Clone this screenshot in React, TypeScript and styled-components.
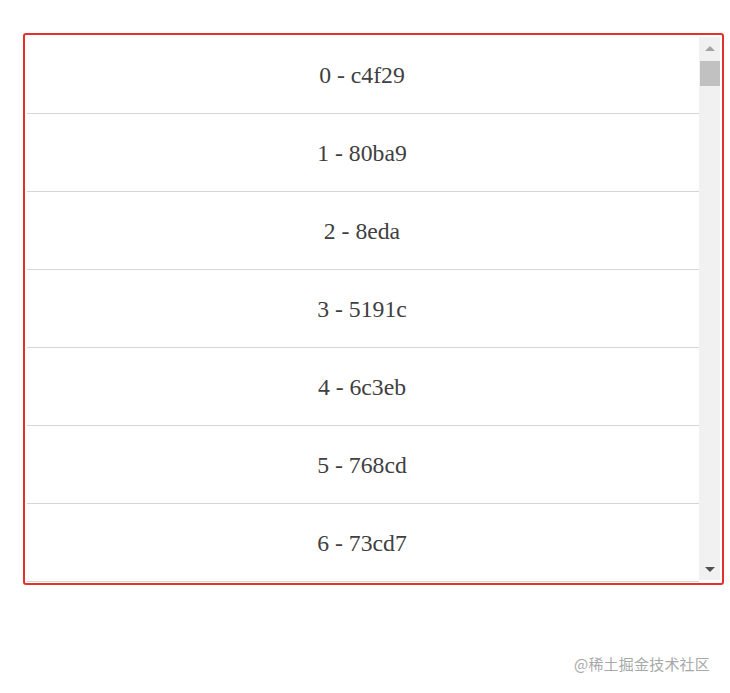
import * as React from "react";
import styled, { createGlobalStyle } from "styled-components";

const GlobalStyle = createGlobalStyle`
  html, body {
    margin: 0;
    padding: 0;
    background: #ffffff;
  }
  body {
    font-family: "Liberation Serif", "Times New Roman", serif;
  }
`;

const Page = styled.div`
  width: 730px;
  height: 693px;
  box-sizing: border-box;
  padding: 33px 6px 0 23px;
  display: flex;
  flex-direction: column;
`;

const Frame = styled.div`
  height: 552px;
  box-sizing: border-box;
  border: 2px solid #e4312b;
  border-radius: 3px;
  display: flex;
  padding-right: 2px;
  overflow: hidden;
`;

const List = styled.div`
  flex: 1;
  overflow: hidden;
  padding: 1px 0 0 2px;
`;

const Row = styled.div`
  height: 78px;
  box-sizing: border-box;
  border-bottom: 1px solid #d6d6d6;
  display: flex;
  align-items: center;
  justify-content: center;
  font-size: 23.7px;
  color: #404040;
  padding: 2px 2px 0 0;
`;

const ScrollBar = styled.div`
  width: 21px;
  margin: 2px 0 3px;
  background: #f1f1f1;
  display: flex;
  flex-direction: column;
  align-items: stretch;
`;

const ArrowButton = styled.div`
  height: 22px;
  display: flex;
  align-items: center;
  justify-content: center;
`;

const Triangle = styled.div<{ $dir: "up" | "down"; $color: string }>`
  width: 0;
  height: 0;
  border-left: 5px solid transparent;
  border-right: 5px solid transparent;
  ${(p) =>
    p.$dir === "up"
      ? `border-bottom: 5px solid ${p.$color};`
      : `border-top: 5px solid ${p.$color};`}
`;

const Track = styled.div`
  flex: 1;
  display: flex;
  flex-direction: column;
  padding-top: 2px;
`;

const Thumb = styled.div`
  height: 25px;
  margin-left: 1px;
  background: #c1c1c1;
`;

const Footer = styled.div`
  flex: 1;
  display: flex;
  justify-content: flex-end;
  align-items: flex-start;
  padding: 68px 14px 0 0;
`;

const Watermark = styled.span`
  font-family: "Noto Sans CJK SC", "Noto Sans", sans-serif;
  font-size: 15px;
  color: #a8a8a8;
  letter-spacing: 0.2px;
`;

const items = ["c4f29", "80ba9", "8eda", "5191c", "6c3eb", "768cd", "73cd7"];

export default function App() {
  return (
    <>
      <GlobalStyle />
      <Page>
        <Frame>
          <List>
            {items.map((hash, i) => (
              <Row key={i}>
                {i} - {hash}
              </Row>
            ))}
          </List>
          <ScrollBar>
            <ArrowButton>
              <Triangle $dir="up" $color="#a3a3a3" />
            </ArrowButton>
            <Track>
              <Thumb />
            </Track>
            <ArrowButton>
              <Triangle $dir="down" $color="#505050" />
            </ArrowButton>
          </ScrollBar>
        </Frame>
        <Footer>
          <Watermark>@稀土掘金技术社区</Watermark>
        </Footer>
      </Page>
    </>
  );
}
